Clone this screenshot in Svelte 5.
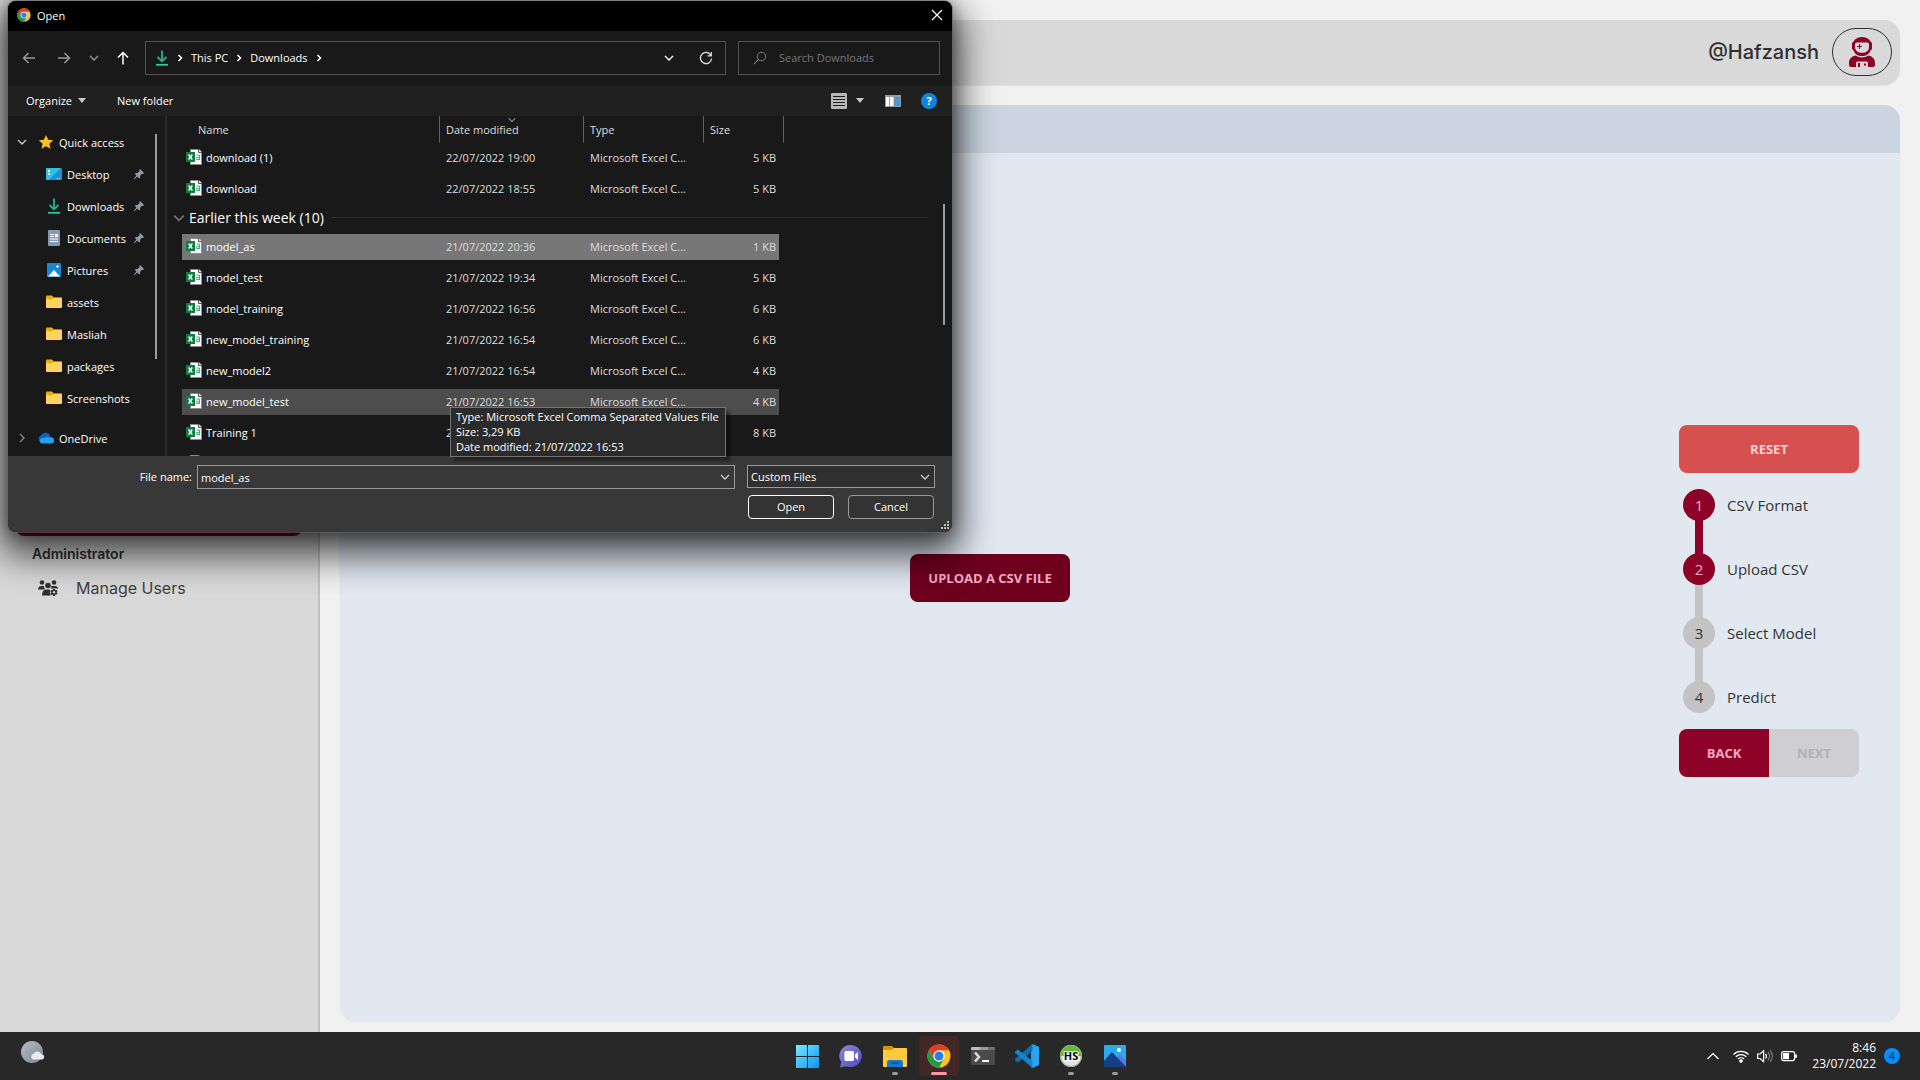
<script>
  const quick = [
    { name: 'Desktop', icon: 'desktop', pinned: true },
    { name: 'Downloads', icon: 'download', pinned: true },
    { name: 'Documents', icon: 'document', pinned: true },
    { name: 'Pictures', icon: 'picture', pinned: true },
    { name: 'assets', icon: 'folder' },
    { name: 'Masliah', icon: 'folder' },
    { name: 'packages', icon: 'folder' },
    { name: 'Screenshots', icon: 'folder' }
  ];
  const recent = [
    { name: 'download (1)', date: '22/07/2022 19:00', size: '5 KB' },
    { name: 'download', date: '22/07/2022 18:55', size: '5 KB' }
  ];
  const earlier = [
    { name: 'model_as', date: '21/07/2022 20:36', size: '1 KB', state: 'selected' },
    { name: 'model_test', date: '21/07/2022 19:34', size: '5 KB' },
    { name: 'model_training', date: '21/07/2022 16:56', size: '6 KB' },
    { name: 'new_model_training', date: '21/07/2022 16:54', size: '6 KB' },
    { name: 'new_model2', date: '21/07/2022 16:54', size: '4 KB' },
    { name: 'new_model_test', date: '21/07/2022 16:53', size: '4 KB', state: 'hovered' },
    { name: 'Training 1', date: '21/07/2022 16:50', size: '8 KB' },
    { name: '', date: '', size: '' }
  ];
  const steps = [
    { label: 'CSV Format', done: true },
    { label: 'Upload CSV', done: true },
    { label: 'Select Model', done: false },
    { label: 'Predict', done: false }
  ];
  let fileName = $state('model_as');
</script>

{#snippet chrome(size)}
  <svg width={size} height={size} viewBox="0 0 24 24" aria-hidden="true">
    <circle cx="12" cy="12" r="11.5" fill="#fcc31e" />
    <path d="M2 6.2A11.5 11.5 0 0 1 22 6.3H12L7 14.8Z" fill="#e33b2e" />
    <path d="M2 6.2 7.1 15 12 17.7 16.9 15 11.9 23.5A11.5 11.5 0 0 1 2 6.2Z" fill="#229a48" />
    <circle cx="12" cy="12" r="5.7" fill="#fff" />
    <circle cx="12" cy="12" r="4.5" fill="#2b7de9" />
  </svg>
{/snippet}

{#snippet downArrow()}
  <svg width="16" height="16" viewBox="0 0 16 16" fill="none" stroke-width="1.8" aria-hidden="true">
    <path d="M8 .5V11M3.5 7 8 11.3 12.5 7" stroke="#22b793" />
    <path d="M2 14.8H14" stroke="#2fc79c" />
  </svg>
{/snippet}

{#snippet placeIcon(kind)}
  {#if kind === 'download'}
    {@render downArrow()}
  {:else}
    <svg width="16" height="16" viewBox="0 0 16 16" aria-hidden="true">
      {#if kind === 'desktop'}
        <rect y="2" width="16" height="12" rx="1" fill="#1a93d0" />
        <path d="M0 3a1 1 0 0 1 1-1h14L3 14H1a1 1 0 0 1-1-1Z" fill="#2fc1e4" />
        <path d="M2 4h2v2H2zM2 7h2v2H2zM11 12h1v1h-1zM13 12h1v1h-1z" fill="#fff" />
      {:else if kind === 'document'}
        <rect x="2" width="12" height="16" rx="1" fill="#8399b4" />
        <path d="M4 4h4v1H4zM4 6h4v1H4zM9 4h3v3H9zM4 8.500h8v1H4zM4 11h8v1H4z" fill="#fff" />
      {:else if kind === 'picture'}
        <rect x="1" y="1" width="14" height="14" rx="1" fill="#1687d8" />
        <path d="M2 14.500 8 8l6 6.500Z" fill="#fff" />
        <path d="M11 3h1v1h1v1h-1v1h-1V5h-1V4h1z" fill="#fff" />
      {:else}
        <path d="M0 2.500A1 1 0 0 1 1 1.500h5l2 2h8V8H0Z" fill="#f0a90d" />
        <path d="M0 5h6.500L8 3.800h7a1 1 0 0 1 1 1V13a1 1 0 0 1-1 1H1a1 1 0 0 1-1-1Z" fill="#ffd45c" />
      {/if}
    </svg>
  {/if}
{/snippet}

{#snippet fileIcon()}
  <svg width="16" height="16" viewBox="0 0 16 16" aria-hidden="true">
    <path d="M4.500.5H13L15.500 3V15.500h-11Z" fill="#fff" stroke="#8b8b8b" />
    <path d="M12.500 0v3.500H16" fill="#ddd" stroke="#555" />
    <rect y="3" width="9" height="10" fill="#107c41" />
    <path d="M2.600 5.500 6.300 10.500M6.300 5.500 2.600 10.500" stroke="#fff" stroke-width="1.400" />
    <path d="M10.500 6h3v5M13.500 8.300h-2.800V10.500h2.800" stroke="#33b27a" fill="none" />
  </svg>
{/snippet}

{#snippet chevron(size)}
  <svg width={size} height={size} viewBox="0 0 10 10" fill="none" stroke="currentColor" stroke-width="1.300" aria-hidden="true">
    <path d="M1 3 5 7 9 3" />
  </svg>
{/snippet}

{#snippet crumbMark()}
  <svg width="6" height="8" viewBox="0 0 6 8" fill="none" stroke="#fff" stroke-width="1.500" aria-hidden="true"><path d="M1.500 1 4.500 4l-3 3" /></svg>
{/snippet}

{#snippet fileRow(file)}
  <tr class="file {file.state ?? ''}">
    <td class="name"><span class="file-name">{@render fileIcon()}{file.name}</span></td>
    <td>{file.date}</td>
    <td>{file.name ? 'Microsoft Excel C...' : ''}</td>
    <td class="size">{file.size}</td>
    <td class="rest"></td>
  </tr>
{/snippet}

<div class="screen">
  <div class="app">
    <aside class="sidebar">
      <div class="active-item"></div>
      <h2>Administrator</h2>
      <a class="side-link" href="#users">
        <svg width="20" height="16" viewBox="0 0 20 16" fill="#303030" aria-hidden="true">
          <circle cx="4" cy="2.500" r="2.300" /><circle cx="16" cy="2.500" r="2.300" /><circle cx="10" cy="5.500" r="2.800" />
          <path d="M0 9.500C0 7 1.500 6 3.500 6H6c0 1.500.5 2.600 1.200 3.500ZM4 15.500c0-4 1.500-6 4.500-6h3l1 1.500-.8 1.500L13 15.500ZM13.500 6H17c2 0 3 1.500 3 3l-2-.7-4 .3-1.200-.4Z" />
          <path d="M15 9h2l.3 1.200 1.200-.4 1 1.700-.9.800.9.900-1 1.600-1.200-.3L17 16h-2l-.3-1.400-1.200.4-1-1.700.9-.9-.9-.9 1-1.700 1.200.4Z" />
          <circle cx="16" cy="12.300" r="1.200" fill="#d5d5d5" />
        </svg>
        Manage Users
      </a>
    </aside>

    <main class="main">
      <header class="topbar">
        <span class="handle">@Hafzansh</span>
        <button class="avatar" aria-label="Profile">
          <svg width="26" height="30" viewBox="0 0 26 30" aria-hidden="true">
            <path d="M4.500 4.500C6 1.500 9.500 0 13 0s7 1.500 8.500 4.500L22 5l1 1v6l-1 1-.8 1c-1 3-4.200 5-8.200 5s-7.200-2-8.200-5L4 13l-1-1V6l1-1Z" fill="#8c0327" />
            <path d="M6 7.500Q6 5.500 8 5.500h10q2 0 2 2V10c0 3.700-3 5.800-7 5.800S6 13.700 6 10Z" fill="#d9d9d9" />
            <path d="M10 7h1v2h2v1h-2v2h-1v-2H8V9h2Z" fill="#8c0327" />
            <path d="M6.500 18.500q6.500 4 13 0C24 19.500 26 22.500 26 26v2q0 2-2 2H2q-2 0-2-2v-2c0-3.500 2-6.500 6.500-7.500Z" fill="#8c0327" />
            <path d="M7 30v-4q0-1.500 1.500-1.500h9Q19 24.500 19 26v4Z" fill="#e7cdd4" />
            <path d="M9 26h2v4H9zM15 26.500h2v2h-2z" fill="#8c0327" />
          </svg>
        </button>
      </header>

      <section class="card">
        <div class="card-head"></div>
        <div class="card-body">
          <div class="upload"><button class="btn upload-btn">UPLOAD A CSV FILE</button></div>
          <div class="wizard">
            <button class="btn reset">RESET</button>
            <ol class="steps">
              {#each steps as step, i}
                <li class:done={step.done}><span class="dot">{i + 1}</span>{step.label}</li>
              {/each}
            </ol>
            <div class="pager">
              <button class="btn back">BACK</button>
              <button class="btn next" disabled>NEXT</button>
            </div>
          </div>
        </div>
      </section>
    </main>
  </div>

  <footer class="taskbar">
    <button class="weather" aria-label="Weather">
      <svg width="24" height="24" viewBox="0 0 24 24" aria-hidden="true">
        <defs><linearGradient id="moon" x1="0" y1="0" x2="1" y2="1"><stop stop-color="#b4bdc8" /><stop offset="1" stop-color="#7c8792" /></linearGradient></defs>
        <circle cx="11" cy="11" r="11" fill="url(#moon)" />
        <path d="M12 18.500a3 3 0 0 1 .6-5.700 4.200 4.200 0 0 1 7.700.4 2.700 2.700 0 0 1 .9 5.300Z" fill="#e8ebee" />
      </svg>
    </button>

    <nav class="apps" aria-label="Apps">
      <button aria-label="Start">
        <svg width="24" height="24" viewBox="0 0 24 24"><defs><linearGradient id="win" x1="0" y1="0" x2="1" y2="1"><stop stop-color="#7ae8ff" /><stop offset="1" stop-color="#0a94f5" /></linearGradient></defs><path d="M1 1h11v11H1zM13 1h11v11H13zM1 13h11v11H1zM13 13h11v11H13z" fill="url(#win)" /></svg>
      </button>
      <button aria-label="Chat">
        <svg width="24" height="24" viewBox="0 0 24 24"><defs><linearGradient id="chat" x1="0" y1="0" x2="1" y2="1"><stop stop-color="#8b8bd2" /><stop offset="1" stop-color="#5049c4" /></linearGradient></defs><path d="M12 1a11.500 11 0 1 1-5 21.200L1 23.500l1.300-5.300A11 11 0 0 1 12 1Z" fill="url(#chat)" /><rect x="5.500" y="7" width="9.500" height="10" rx="1.500" fill="#fff" /><path d="M16 10.500 19 8v8l-3-2.500Z" fill="#fff" /></svg>
      </button>
      <button class="running" aria-label="File Explorer">
        <svg width="24" height="24" viewBox="0 0 24 24"><path d="M0 3a1 1 0 0 1 1-1h8l2.500 2.500H24V9H0Z" fill="#d99408" /><path d="M0 6h9l2-2h12a1 1 0 0 1 1 1v17a1 1 0 0 1-1 1H1a1 1 0 0 1-1-1Z" fill="#ffca3e" /><path d="M4 23v-4.500Q4 16 6.500 16h11q2.500 0 2.500 2.500V23Z" fill="#1478cd" /><path d="M8 19h8" stroke="#0b5a9e" stroke-width="1.500" /></svg>
      </button>
      <button class="running current" aria-label="Google Chrome">{@render chrome(24)}</button>
      <button aria-label="Terminal">
        <svg width="24" height="24" viewBox="0 0 24 24"><rect y="3" width="24" height="18" rx="1" fill="#4a4a4a" /><path d="M0 6V4q0-1 1-1h8v3Z" fill="#bdbdbd" /><path d="M9 3h8v3H9z" fill="#999" /><path d="M17 3h6q1 0 1 1v2h-7z" fill="#6f6f6f" /><path d="M4 8.500 8 13l-4 4.500" fill="none" stroke="#ddd" stroke-width="2.500" /><path d="M11 17h7" stroke="#fff" stroke-width="2" /></svg>
      </button>
      <button aria-label="Visual Studio Code">
        <svg width="24" height="24" viewBox="0 0 24 24"><path d="M17.500 0 24 3v18l-6.500 3L16 23V1Z" fill="#29a4f0" /><path d="M17.500 0v7L3 18.500 0 16.500v-1.500Z" fill="#0a6fb8" /><path d="M17.500 24v-7L3 5.500 0 7.500V9Z" fill="#1583cc" /></svg>
      </button>
      <button class="running" aria-label="HeidiSQL">
        <svg width="24" height="24" viewBox="0 0 24 24"><circle cx="12" cy="12" r="11" fill="#e4e4e4" /><path d="M1 12a11 11 0 0 1 22 0Z" fill="#60bd2f" /><circle cx="12" cy="12" r="10.500" fill="none" stroke="#9aa596" /><text x="12" y="16" text-anchor="middle" class="hs">HS</text></svg>
      </button>
      <button class="running" aria-label="Photos">
        <svg width="24" height="24" viewBox="0 0 24 24"><rect x="1" y="1" width="22" height="22" rx="1" fill="#2da9ea" /><path d="M12 15 17 10.500 23 17v6H12Z" fill="#5379e4" /><path d="M1 17 8 9q1-1 2 0l13 14H1Z" fill="#123f86" /><circle cx="16" cy="6" r="2" fill="#fff" /></svg>
      </button>
    </nav>

    <div class="tray">
      <button aria-label="Hidden icons">
        <svg width="14" height="16" viewBox="0 0 14 16" fill="none" stroke="#fff" stroke-width="1.200"><path d="M1.500 11 7 5.500l5.500 5.500" /></svg>
      </button>
      <button class="status" aria-label="Network, volume and battery">
        <svg width="16" height="16" viewBox="0 0 16 16" fill="none" stroke="#fff" stroke-width="1.200"><path d="M.5 6.500a10.500 10.500 0 0 1 15 0M2.800 8.800a7.400 7.400 0 0 1 10.400 0M5 11a4.200 4.200 0 0 1 6 0" /><circle cx="8" cy="13" r="1.200" fill="#fff" /></svg>
        <svg width="16" height="16" viewBox="0 0 16 16" fill="none" stroke="#fff" stroke-width="1.200"><path d="M.6 6v4.500h2.500l3.500 3.200V2.800L3.100 6Z" /><path d="M8.500 6a3.500 3.500 0 0 1 0 4.500" /><path d="M10.800 4a6 6 0 0 1 0 8.500M13 2.200a9 9 0 0 1 0 12" stroke="#777" /></svg>
        <svg width="16" height="16" viewBox="0 0 16 16" fill="none" stroke="#fff" stroke-width="1.200"><rect x=".6" y="3.600" width="13" height="9" rx="2" /><path d="M2 5h6v6.200H2z" fill="#fff" stroke="none" /><path d="M15 6.500v3.200" stroke-width="2" /></svg>
      </button>
      <time class="clock"><span>8:46</span><span>23/07/2022</span></time>
      <span class="badge">4</span>
    </div>
  </footer>

  <div class="dialog" role="dialog" aria-label="Open">
    <div class="titlebar">
      {@render chrome(14)}
      <span>Open</span>
      <button class="close" aria-label="Close">
        <svg width="12" height="12" viewBox="0 0 12 12" stroke="#fff" stroke-width="1.200"><path d="M1 1l10 10M11 1 1 11" /></svg>
      </button>
    </div>

    <div class="navbar">
      <div class="nav-buttons">
        <button class="dim" aria-label="Back"><svg width="14" height="14" viewBox="0 0 14 14" fill="none" stroke="currentColor" stroke-width="1.500"><path d="M13 7H1.500M6.500 2l-5 5 5 5" /></svg></button>
        <button class="dim" aria-label="Forward"><svg width="14" height="14" viewBox="0 0 14 14" fill="none" stroke="currentColor" stroke-width="1.500"><path d="M1 7h11.500M7.500 2l5 5-5 5" /></svg></button>
        <button class="dim" aria-label="Recent locations">{@render chevron(10)}</button>
        <button aria-label="Up"><svg width="14" height="14" viewBox="0 0 14 14" fill="none" stroke="currentColor" stroke-width="1.500"><path d="M7 13.500V1.500M2 6.500l5-5 5 5" /></svg></button>
      </div>
      <div class="address">
        {@render downArrow()}
        {@render crumbMark()}
        <a href="#pc">This PC</a>
        {@render crumbMark()}
        <a href="#downloads">Downloads</a>
        {@render crumbMark()}
        <button class="history" aria-label="Previous locations">{@render chevron(10)}</button>
        <button aria-label="Refresh"><svg width="14" height="14" viewBox="0 0 14 14" fill="none" stroke="#ddd" stroke-width="1.300"><path d="M12 4.500A5.600 5.600 0 1 0 12.600 7.500M12.300 1v3.800H8.500" /></svg></button>
      </div>
      <label class="search">
        <svg width="14" height="14" viewBox="0 0 14 14" fill="none" stroke="#777" stroke-width="1.100"><circle cx="8.500" cy="5.500" r="4.200" /><path d="M5.500 8.500.8 13.200" /></svg>
        <input type="search" placeholder="Search Downloads" aria-label="Search Downloads" />
      </label>
    </div>

    <div class="toolbar">
      <button>Organize <svg width="8" height="5" viewBox="0 0 8 5" fill="#c8c8c8"><path d="M0 0h8L4 5Z" /></svg></button>
      <button>New folder</button>
      <span class="grow"></span>
      <button class="view" aria-label="Change view">
        <svg width="16" height="16" viewBox="0 0 16 16"><rect width="16" height="16" rx="1" fill="#b8b8b8" /><path d="M2 3.500h12M2 6.500h12M2 9.500h12M2 12.500h12" stroke="#1d1d1d" /></svg>
        <svg width="8" height="5" viewBox="0 0 8 5" fill="#c8c8c8"><path d="M0 0h8L4 5Z" /></svg>
      </button>
      <button aria-label="Preview pane">
        <svg width="16" height="12" viewBox="0 0 16 12"><rect width="16" height="12" fill="#9a9a9a" /><path d="M1 2h3v9H1zM5 2h3.500v9H5z" fill="#fff" /><path d="M9.500 2H15v9H9.500z" fill="#3c9be6" /></svg>
      </button>
      <button class="help" aria-label="Help">?</button>
    </div>

    <div class="browser">
      <div class="tree">
        <div class="branch"><span class="toggle">{@render chevron(10)}</span>
          <svg width="16" height="16" viewBox="0 0 16 16"><path d="M8 1l2.100 4.800 5.100.5-3.800 3.400 1.100 5.100L8 12.200l-4.500 2.600 1.100-5.100L.8 6.300l5.100-.5Z" fill="#ffc01e" /></svg>
          Quick access</div>
        {#each quick as place}
          <div class="leaf">{@render placeIcon(place.icon)}<span>{place.name}</span>
            {#if place.pinned}
              <svg class="pin" width="10" height="12" viewBox="0 0 10 12"><path d="M6 1 10 5 9 6 7.500 6 6 8v2L5 10.500 3.200 8.500 0 11.500 0 10.500 2.500 7.500 1 6 1.500 5h2L5.500 3 5.300 1.700Z" fill="#929ca8" /></svg>
            {/if}
          </div>
        {/each}
        <div class="branch cloud"><span class="toggle side">{@render chevron(10)}</span>
          <svg width="16" height="12" viewBox="0 0 16 12"><path d="M3.500 10.500a3.500 3.500 0 0 1-.4-6.800 5 5 0 0 1 9.200.3L8 8.500Z" fill="#0b63c1" /><path d="M4 11.500a2.700 2.700 0 0 1-1-5L9 5l4 .3a3.100 3.100 0 0 1 0 6.200Z" fill="#259ff0" /></svg>
          OneDrive</div>
        <span class="scroll tree-scroll"></span>
      </div>

      <div class="files">
        <table>
          <thead>
            <tr>
              <th class="name">Name</th>
              <th class="sorted">Date modified<span class="sort-mark">{@render chevron(8)}</span></th>
              <th>Type</th>
              <th>Size</th>
              <th class="rest"></th>
            </tr>
          </thead>
          <tbody>
            {#each recent as file}{@render fileRow(file)}{/each}
            <tr class="group">
              <td colspan="5"><div class="group-head"><span class="group-toggle">{@render chevron(12)}</span>Earlier this week (10)<hr /></div></td>
            </tr>
            {#each earlier as file}{@render fileRow(file)}{/each}
          </tbody>
        </table>
        <span class="scroll file-scroll"></span>
      </div>
    </div>

    <div class="dialog-foot">
      <label for="file-name">File name:</label>
      <div class="combo"><input id="file-name" bind:value={fileName} />{@render chevron(10)}</div>
      <div class="combo kind">
        <select aria-label="File type"><option>Custom Files</option></select>{@render chevron(10)}
      </div>
      <div class="actions">
        <button class="primary">Open</button>
        <button>Cancel</button>
      </div>
      <svg class="grip" width="8" height="8" viewBox="0 0 8 8" fill="#bbb"><path d="M6 0h2v2H6zM3 3h2v2H3zM6 3h2v2H6zM0 6h2v2H0zM3 6h2v2H3zM6 6h2v2H6z" /></svg>
    </div>

    <div class="tooltip" role="tooltip">
      <span>Type: Microsoft Excel Comma Separated Values File</span>
      <span>Size: 3,29 KB</span>
      <span>Date modified: 21/07/2022 16:53</span>
    </div>
  </div>
</div>

<style>
  :global(body) { margin: 0; }
  * { box-sizing: border-box; }
  button { font: inherit; color: inherit; background: none; border: 0; padding: 0; display: inline-flex; align-items: center; justify-content: center; }
  a { color: inherit; text-decoration: none; }
  svg { flex: none; display: block; }

  .screen { position: relative; min-height: 100vh; display: flex; flex-direction: column; overflow: hidden; font-family: 'Open Sans', 'Noto Sans', sans-serif; background: #f1f1f1; }
  .app { flex: 1; display: flex; }

  .sidebar { flex: 0 0 320px; background: #d9d9d9; border-right: 2px solid #c1c1c1; padding: 488px 16px 0; font-family: Inter, sans-serif; color: #303030; }
  .active-item { height: 48px; border-radius: 8px; background: #8c0327; }
  .sidebar h2 { margin: 8px 0 0 16px; font-size: 14px; line-height: 20px; font-weight: 600; }
  .side-link { display: flex; align-items: center; gap: 18px; margin-top: 4px; padding-left: 22px; height: 40px; font-size: 16px; font-weight: 400; color: #404040; }

  .main { flex: 1; min-width: 0; display: flex; flex-direction: column; gap: 20px; padding: 20px 20px 11px; }
  .topbar { height: 65px; border-radius: 16px; background: #d9d9d9; box-shadow: 0 1px 2px #0001; display: flex; align-items: center; justify-content: flex-end; gap: 13px; padding: 0 8px 1px 0; }
  .handle { font: 500 20px/28px Inter, sans-serif; color: #303030; }
  .avatar { width: 60px; height: 48px; border: 1px solid #303030; border-radius: 24px; }

  .card { flex: 1; display: flex; flex-direction: column; border-radius: 16px; overflow: hidden; background: #e1e8f0; box-shadow: 0 1px 2px #0001; }
  .card-head { height: 48px; background: #cbd5e1; }
  .card-body { flex: 1; display: grid; grid-template-columns: 1fr 260px; align-items: center; }
  .upload { display: flex; justify-content: center; padding-bottom: 18px; }
  .btn { height: 48px; border-radius: 8px; font-weight: 700; font-size: 13px; }
  .upload-btn { width: 160px; background: #6e001e; color: #f7a9c4; }
  .wizard { width: 180px; justify-self: center; margin-right: 2px; padding-top: 28px; display: flex; flex-direction: column; }
  .reset { background: #d75050; color: #ffd3d3; }
  .steps { list-style: none; margin: 0; padding: 0; font-size: 15px; color: #333; }
  .steps li { position: relative; height: 64px; display: flex; align-items: center; gap: 12px; padding-left: 4px; }
  .steps li + li::before { content: ''; position: absolute; left: 16px; top: -32px; width: 8px; height: 64px; background: #c3c3c3; }
  .steps li.done::before { background: #8c0327; }
  .dot { position: relative; z-index: 1; width: 32px; height: 32px; border-radius: 50%; background: #c3c3c3; display: grid; place-items: center; }
  .done .dot { background: #8c0327; color: #f7a9c4; }
  .pager { display: grid; grid-template-columns: 1fr 1fr; }
  .back { background: #8c0327; color: #f7a9c4; border-radius: 8px 0 0 8px; }
  .next { background: #cfced3; color: #b0b0b5; border-radius: 0 8px 8px 0; }

  .taskbar { height: 48px; background: #282828; display: grid; grid-template-columns: 1fr auto 1fr; align-items: center; color: #fff; }
  .weather { justify-self: start; margin-left: 21px; padding-bottom: 7px; }
  .apps { display: flex; gap: 4px; padding-left: 2px; }
  .apps button { position: relative; width: 40px; height: 40px; border-radius: 4px; }
  .apps .running::after { content: ''; position: absolute; bottom: 1px; left: 17px; width: 6px; height: 3px; border-radius: 2px; background: #9b9b9b; }
  .apps .current { background: #442626; }
  .apps .current::after { left: 12px; width: 16px; background: #ff99a0; }
  .hs { font: 700 11px 'Open Sans', sans-serif; fill: #000; stroke: #fff; stroke-width: 2px; paint-order: stroke; }
  .tray { justify-self: end; display: flex; align-items: center; margin-right: 20px; }
  .status { gap: 8px; margin: 0 15px 0 13px; }
  .clock { display: flex; flex-direction: column; align-items: flex-end; font-size: 12px; line-height: 16px; }
  .badge { width: 16px; height: 16px; margin-left: 8px; border-radius: 50%; background: #0a8cff; color: #10294a; font-size: 11px; line-height: 16px; text-align: center; }

  .dialog { position: absolute; left: 8px; top: 1px; width: 944px; border-radius: 8px; background: #191919; color: #fff; font-size: 11px; box-shadow: 0 0 0 1px #6668, 0 16px 36px 8px #000a, 0 2px 16px #0006; }
  .titlebar { height: 30px; border-radius: 8px 8px 0 0; background: #000; display: flex; align-items: center; gap: 6px; padding: 0 9px 2px; }
  .close { margin-left: auto; }
  .navbar { height: 55px; display: flex; align-items: center; padding: 0 12px 1px 3px; }
  .nav-buttons { display: grid; grid-template-columns: 36px 34px 26px 32px; margin-right: 6px; }
  .dim { color: #999; }
  .address { flex: 1; height: 34px; border: 1px solid #535353; display: flex; align-items: center; gap: 7px; padding: 0 12px 1px 8px; }
  .address a { margin: 0 1px; }
  .history { margin: 0 18px 0 auto; }
  .search { width: 202px; height: 34px; margin-left: 12px; border: 1px solid #535353; display: flex; align-items: center; gap: 12px; padding: 0 0 1px 14px; }
  .search input { flex: 1; min-width: 0; border: 0; padding: 0; background: none; font: inherit; color: #fff; }
  .search input::placeholder { color: #777; }
  .toolbar { height: 30px; background: #202020; display: flex; align-items: center; gap: 31px; padding: 0 15px 1px 18px; }
  .toolbar button { gap: 6px; }
  .grow { flex: 1; }
  .toolbar .view { gap: 9px; margin-right: -10px; }
  .toolbar .help { width: 16px; height: 16px; margin-left: -11px; border-radius: 50%; background: #0f86dc; font-weight: 700; font-size: 11px; }

  .browser { display: grid; grid-template-columns: 159px 1fr; height: 340px; overflow: hidden; }
  .tree { position: relative; padding-top: 10px; border-right: 2px solid #2c2c2c; }
  .branch, .leaf { height: 32px; display: flex; align-items: center; }
  .branch { padding-left: 9px; gap: 5px; }
  .toggle { width: 16px; color: #ccc; }
  .toggle.side { transform: rotate(-90deg); width: 10px; margin-right: 6px; color: #888; }
  .leaf { padding: 0 21px 0 38px; gap: 5px; }
  .pin { margin-left: auto; }
  .cloud { margin-top: 8px; }
  .scroll { position: absolute; width: 2px; background: #9c9c9c; }
  .tree-scroll { right: 8px; top: 18px; height: 225px; }
  .files { position: relative; padding: 0 24px 0 4px; overflow: hidden; }
  .file-scroll { right: 7px; top: 88px; height: 121px; }
  table { width: 100%; table-layout: fixed; border-collapse: separate; border-spacing: 0; }
  th, td { padding: 0 6px; text-align: left; font-weight: 400; white-space: nowrap; color: #dedede; }
  th { position: relative; height: 27px; border-left: 1px solid #636363; border-bottom: 1px solid transparent; background-clip: padding-box; width: 120px; }
  th.name { width: 268px; padding-left: 27px; border-left: 0; }
  th.sorted { width: 144px; }
  th:nth-child(4) { width: 80px; }
  th.rest { width: auto; }
  .sort-mark { position: absolute; left: 68px; top: 0; color: #999; }
  .file td { height: 31px; border: 0 solid transparent; border-width: 2px 0 3px; padding: 0 7px 2px; background-clip: padding-box; }
  .file td.name { border-left-width: 11px; padding-left: 4px; color: #fff; }
  .file td.size { border-right-width: 4px; padding-right: 3px; text-align: right; }
  .file-name { display: flex; align-items: center; gap: 4px; }
  .selected td:not(.rest) { background-color: #777; }
  .hovered td:not(.rest) { background-color: #4d4d4d; }
  .group td { height: 27px; padding: 0; vertical-align: top; }
  .group-head { display: flex; align-items: center; gap: 8px; font-size: 14px; line-height: 25px; color: #fff; }
  .group-toggle { color: #777; margin: 0 -4px 0 2px; }
  .group-head hr { flex: 1; height: 1px; margin: 0; border: 0; background: #303030; }

  .dialog-foot { position: relative; display: grid; grid-template-columns: 184px 538px 188px; grid-template-rows: 24px 24px; column-gap: 5px; row-gap: 6px; height: 76px; padding-top: 9px; border-radius: 0 0 8px 8px; background: #383838; }
  .dialog-foot label { text-align: right; line-height: 23px; }
  .combo { position: relative; height: 24px; border: 1px solid #9a9a9a; display: flex; align-items: center; padding-right: 4px; color: #ccc; }
  .combo input, .combo select { flex: 1; min-width: 0; height: 100%; border: 0; padding: 0 3px; margin: 0; background: none; color: #fff; font: inherit; outline: 0; appearance: none; }
  .combo.kind { height: 23px; margin-left: 7px; margin-right: -7px; background: #303030; }
  .actions { grid-column: 3; display: flex; gap: 14px; margin-left: 8px; }
  .actions button { flex: none; width: 86px; height: 24px; padding-bottom: 1px; border: 1px solid #9a9a9a; border-radius: 4px; background: #333; }
  .actions .primary { border-color: #fff; }
  .grip { position: absolute; right: 3px; bottom: 3px; }

  .tooltip { position: absolute; left: 442px; top: 406px; border: 1px solid #767676; background: #2b2b2b; padding: 1px 6px 2px 5px; display: flex; flex-direction: column; line-height: 15px; white-space: nowrap; box-shadow: 4px 4px 3px #0006; }
</style>
